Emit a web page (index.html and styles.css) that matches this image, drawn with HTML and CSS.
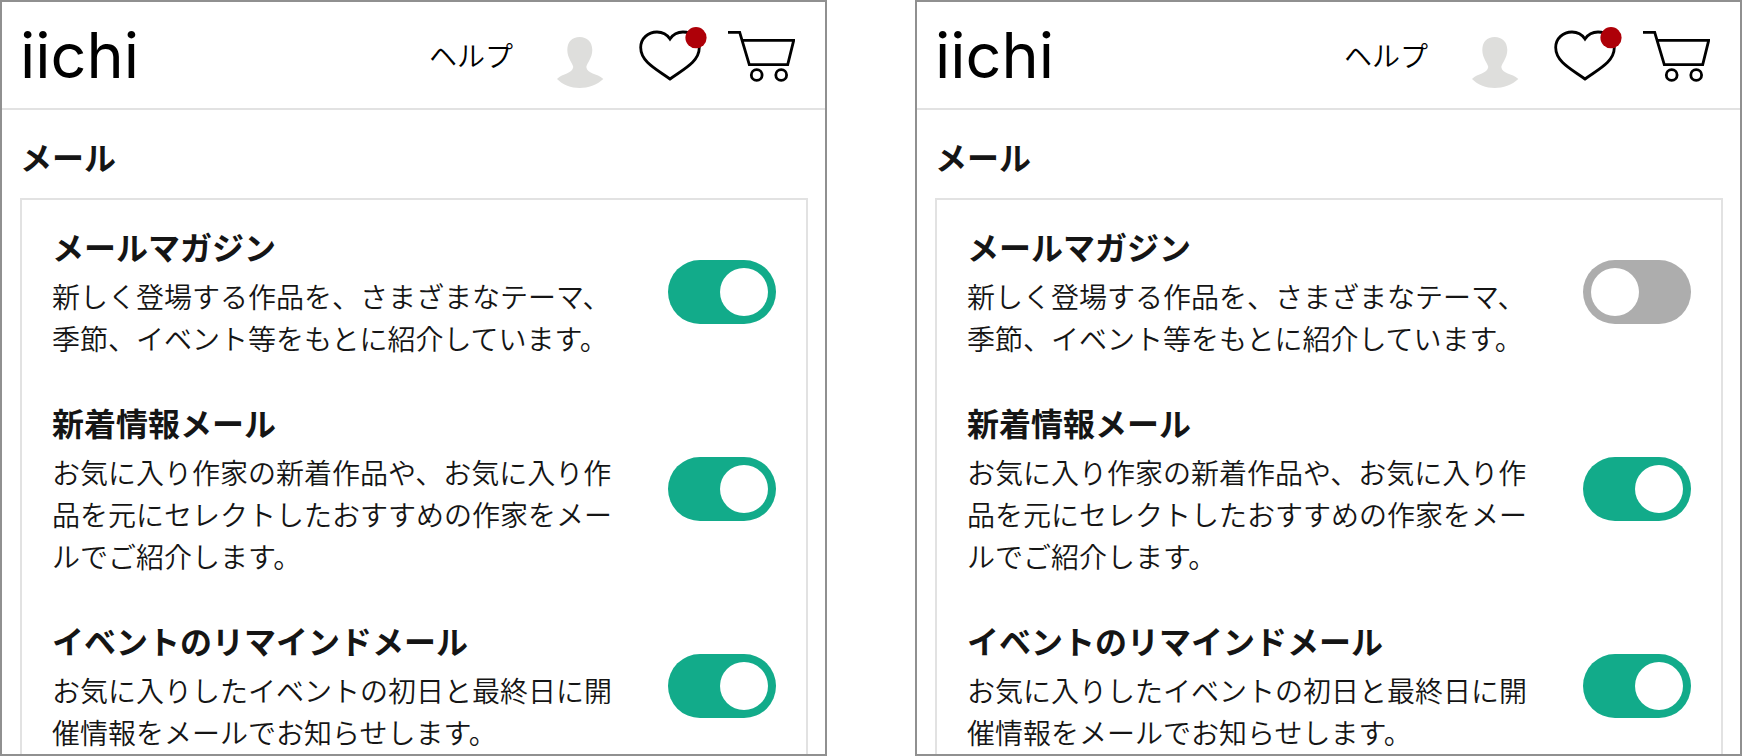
FILE: index.html
```html
<!DOCTYPE html>
<html lang="ja">
<head>
<meta charset="utf-8">
<meta name="viewport" content="width=device-width, initial-scale=1">
<title>iichi メール設定</title>
<link rel="stylesheet" href="styles.css">
</head>
<body>
<svg class="sprite" aria-hidden="true">
  <symbol id="avatar" viewBox="0 0 68 70">
    <path fill="#dededc" d="M38.7 17C46 17 51.3 22 51.3 30C51.3 38 46 43 45.3 47C46 54 56 53 62.3 59C56 65 47 68 38.7 68C30 68 22 65 16 59C22 53 31 54 32.3 47C31.5 43 26.3 38 26.3 30C26.3 22 31 17 38.7 17Z"/>
  </symbol>
  <symbol id="heart" viewBox="0 0 62 70" overflow="visible">
    <path fill="none" stroke="#000" stroke-width="2.8" d="M33 19C30 14.5 25.5 12 20 12C11 12 3.7 18.5 3.7 27.5C3.7 42 20 49.5 33 59C46 49.5 62.3 42 62.3 27.5C62.3 18.5 55 12 46 12C40.5 12 36 14.5 33 19Z"/>
    <circle cx="59" cy="17.7" r="10.6" fill="#ae0008"/>
  </symbol>
  <symbol id="cart" viewBox="0 0 68 70">
    <g fill="none" stroke="#000" stroke-width="2.8">
      <path d="M1 12.3H12.7L22.3 44.7H60.7L66.7 20.3H14.7"/>
      <circle cx="29.7" cy="55" r="5.4"/>
      <circle cx="54.2" cy="55" r="5.4"/>
    </g>
  </symbol>
</svg>
<div class="screens">
  <section class="screen">
    <header class="header">
      <a class="logo" href="#">iichi</a>
      <nav class="nav">
        <a class="help" href="#">ヘルプ</a>
        <a class="icon" href="#" aria-label="マイページ"><svg width="68" height="70"><use href="#avatar"/></svg></a>
        <a class="icon" href="#" aria-label="お気に入り"><svg width="62" height="70"><use href="#heart"/></svg></a>
        <a class="icon" href="#" aria-label="カート"><svg width="68" height="70"><use href="#cart"/></svg></a>
      </nav>
    </header>
    <main class="main">
      <h1 class="title">メール</h1>
      <div class="card">
        <div class="item">
          <div class="text">
            <h2 class="name"><label for="a-magazine">メールマガジン</label></h2>
            <p class="description">新しく登場する作品を、さまざまなテーマ、季節、イベント等をもとに紹介しています。</p>
          </div>
          <input class="toggle" type="checkbox" role="switch" id="a-magazine" checked>
        </div>
        <div class="item">
          <div class="text">
            <h2 class="name"><label for="a-arrivals">新着情報メール</label></h2>
            <p class="description">お気に入り作家の新着作品や、お気に入り作品を元にセレクトしたおすすめの作家をメールでご紹介します。</p>
          </div>
          <input class="toggle" type="checkbox" role="switch" id="a-arrivals" checked>
        </div>
        <div class="item">
          <div class="text">
            <h2 class="name"><label for="a-events">イベントのリマインドメール</label></h2>
            <p class="description">お気に入りしたイベントの初日と最終日に開催情報をメールでお知らせします。</p>
          </div>
          <input class="toggle" type="checkbox" role="switch" id="a-events" checked>
        </div>
      </div>
    </main>
  </section>
  <section class="screen">
    <header class="header">
      <a class="logo" href="#">iichi</a>
      <nav class="nav">
        <a class="help" href="#">ヘルプ</a>
        <a class="icon" href="#" aria-label="マイページ"><svg width="68" height="70"><use href="#avatar"/></svg></a>
        <a class="icon" href="#" aria-label="お気に入り"><svg width="62" height="70"><use href="#heart"/></svg></a>
        <a class="icon" href="#" aria-label="カート"><svg width="68" height="70"><use href="#cart"/></svg></a>
      </nav>
    </header>
    <main class="main">
      <h1 class="title">メール</h1>
      <div class="card">
        <div class="item">
          <div class="text">
            <h2 class="name"><label for="b-magazine">メールマガジン</label></h2>
            <p class="description">新しく登場する作品を、さまざまなテーマ、季節、イベント等をもとに紹介しています。</p>
          </div>
          <input class="toggle" type="checkbox" role="switch" id="b-magazine">
        </div>
        <div class="item">
          <div class="text">
            <h2 class="name"><label for="b-arrivals">新着情報メール</label></h2>
            <p class="description">お気に入り作家の新着作品や、お気に入り作品を元にセレクトしたおすすめの作家をメールでご紹介します。</p>
          </div>
          <input class="toggle" type="checkbox" role="switch" id="b-arrivals" checked>
        </div>
        <div class="item">
          <div class="text">
            <h2 class="name"><label for="b-events">イベントのリマインドメール</label></h2>
            <p class="description">お気に入りしたイベントの初日と最終日に開催情報をメールでお知らせします。</p>
          </div>
          <input class="toggle" type="checkbox" role="switch" id="b-events" checked>
        </div>
      </div>
    </main>
  </section>
</div>
</body>
</html>
```

FILE: styles.css
```css
* {
  box-sizing: border-box;
}

body {
  margin: 0;
  background: #fff;
  color: #151515;
  font-family: "Noto Sans CJK JP", sans-serif;
  font-size: 28px;
  line-height: 42px;
}

.sprite {
  display: none;
}

.screens {
  display: grid;
  grid-template-columns: 1fr 1fr;
  gap: 88px;
  height: 100vh;
}

.screen {
  overflow: hidden;
  border: 2px solid #909090;
}

.header {
  display: flex;
  align-items: center;
  justify-content: space-between;
  padding: 18px 30px 18px 18px;
  border-bottom: 2px solid #e2e2e2;
}

.logo {
  color: #000;
  font-family: Inter, Arial, sans-serif;
  font-size: 63px;
  line-height: 64px;
  text-decoration: none;
}

.nav {
  display: flex;
  align-items: center;
  gap: 28px;
}

.help {
  color: #000;
  font-weight: 350;
  text-decoration: none;
}

.icon svg {
  display: block;
  overflow: visible;
}

.main {
  padding: 24px 17px 24px 18px;
}

.title,
.name {
  margin: 0;
  font-size: 32px;
  font-weight: 700;
  line-height: 44px;
}

.card {
  display: grid;
  gap: 41px;
  margin-top: 20px;
  padding: 24px 30px;
  border: 2px solid #e2e2e2;
}

.item {
  display: flex;
  align-items: center;
  justify-content: space-between;
  gap: 48px;
}

.description {
  margin: 7px 0 0;
  font-weight: 350;
}

.toggle {
  appearance: none;
  display: flex;
  flex: none;
  width: 108px;
  height: 64px;
  margin: 0;
  padding: 8px;
  border-radius: 32px;
  background: #adadad;
}

.toggle::before {
  content: "";
  width: 48px;
  height: 48px;
  border-radius: 50%;
  background: #fff;
}

.toggle:checked {
  justify-content: flex-end;
  background: #12ab8a;
}
```
